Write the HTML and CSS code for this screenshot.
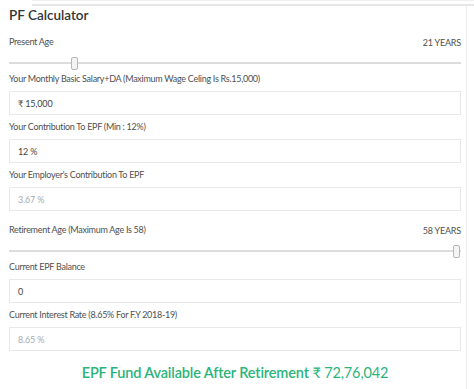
FILE: index.html
```html
<!DOCTYPE html>
<html lang="en">
<head>
    <meta charset="UTF-8">
    <meta name="viewport" content="width=device-width, initial-scale=1.0">
    <title>PF Calculator</title>
    <link rel="stylesheet" href="styles.css">
</head>
<body>
    <div class="top-strip"></div>
    <div class="calc">
        <h2 class="calc-title">PF Calculator</h2>

        <!-- Present age slider -->
        <div class="field range-field first">
            <div class="label-row">
                <label>Present Age</label>
                <span class="range-value">21 YEARS</span>
            </div>
            <div class="slider">
                <div class="track"></div>
                <div class="thumb" style="left: 62px"></div>
            </div>
        </div>

        <div class="field">
            <label>Your Monthly Basic Salary+DA (Maximum Wage Celing Is Rs.15,000)</label>
            <div class="input">₹ 15,000</div>
        </div>

        <div class="field">
            <label>Your Contribution To EPF (Min : 12%)</label>
            <div class="input">12 %</div>
        </div>

        <div class="field">
            <label>Your Employer's Contribution To EPF</label>
            <div class="input disabled">3.67 %</div>
        </div>

        <!-- Retirement age slider -->
        <div class="field range-field">
            <div class="label-row">
                <label>Retirement Age (Maximum Age Is 58)</label>
                <span class="range-value">58 YEARS</span>
            </div>
            <div class="slider">
                <div class="track"></div>
                <div class="thumb" style="left: 444px"></div>
            </div>
        </div>

        <div class="field">
            <label>Current EPF Balance</label>
            <div class="input">0</div>
        </div>

        <div class="field">
            <label>Current Interest Rate (8.65% For F.Y 2018-19)</label>
            <div class="input disabled">8.65 %</div>
        </div>

        <div class="result">
            <strong>EPF Fund Available After Retirement</strong> <span>₹ 72,76,042</span>
        </div>
    </div>
</body>
</html>
```

FILE: styles.css
```css
/* styles.css */

body, html {
    margin: 0;
    padding: 0;
    font-family: Lato, "Open Sans", sans-serif;
    background-color: #ffffff;
    color: #555;
}

.top-strip {
    height: 3px;
    margin-left: 32px;
    border-top: 1px solid #f0f0f0;
    border-bottom: 2px solid #e6e6e6;
}

.calc {
    width: 452px;
    min-height: 383px;
    padding: 0 5px 0 9px;
    border-right: 1px solid #ececec;
}

.calc-title {
    margin: 0;
    font-size: 13.5px;
    line-height: 18px;
    font-weight: 600;
    color: #333;
}

.field {
    display: flex;
    flex-direction: column;
    margin-top: 4px;
}

.field label {
    font-size: 9px;
    line-height: 16px;
    letter-spacing: -0.28px;
    color: #505050;
    margin-bottom: 4px;
}

.range-field {
    margin-top: 11px;
}

.range-field.first {
    margin-top: 10px;
}

/* field right under a slider sits closer */
.range-field + .field {
    margin-top: 1px;
}

.label-row {
    display: flex;
    justify-content: space-between;
    align-items: center;
}

.label-row label {
    margin-bottom: 0;
}

.range-value {
    font-size: 9px;
    letter-spacing: -0.2px;
    color: #505050;
}

.slider {
    position: relative;
    height: 14px;
    margin-top: 6px;
    display: flex;
    align-items: center;
}

.track {
    flex: 1;
    height: 2px;
    background-color: #dcdcdc;
}

.thumb {
    position: absolute;
    top: 1px;
    width: 5px;
    height: 11px;
    background-color: #f4f4f4;
    border: 1px solid #b8b8b8;
    border-radius: 2px;
}

.input {
    height: 24px;
    line-height: 24px;
    padding-left: 8px;
    border: 1px solid #e8e8e8;
    font-size: 9px;
    letter-spacing: -0.15px;
    color: #444;
    box-sizing: border-box;
}

.input.disabled {
    color: #aaa;
}

.result {
    margin-top: 12px;
    line-height: 20px;
    text-align: center;
    font-size: 14.5px;
    letter-spacing: -0.15px;
    color: #2ab47a;
}

.result strong {
    font-weight: 600;
}
```
